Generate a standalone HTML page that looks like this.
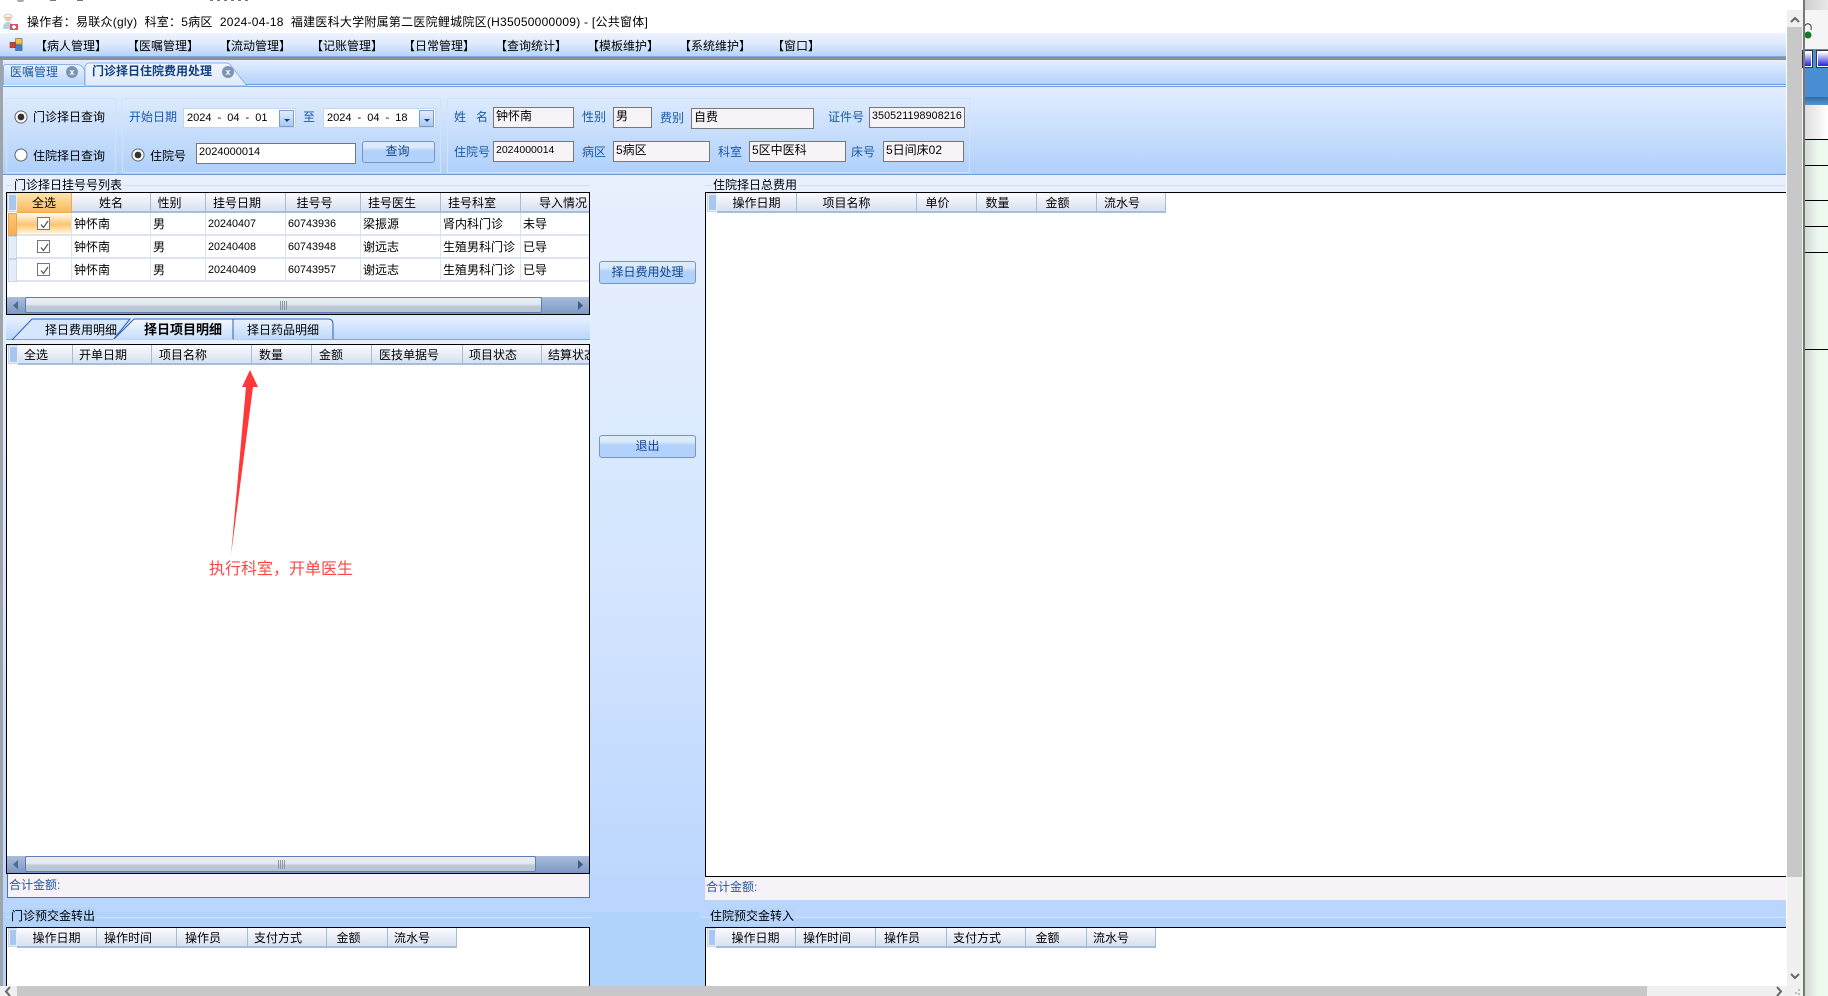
<!DOCTYPE html>
<html lang="zh"><head><meta charset="utf-8"><title>门诊择日住院费用处理</title>
<style>
html,body{margin:0;padding:0;width:1828px;height:996px;overflow:hidden;background:#fff}
body{position:relative;font-family:"Liberation Sans","WenQuanYi Zen Hei","Noto Sans CJK SC",sans-serif;font-size:12px;color:#000}
div,span{position:absolute;box-sizing:border-box;white-space:nowrap}
svg{position:absolute;overflow:visible}
.b{color:#1b5aa5}
.t{line-height:16px;height:16px}
.in{background:#f8f3f7;border:1px solid #777;line-height:17px;padding-left:2px;height:21px}
.in.w{background:#fff}
.date{background:#fff;border:1px solid #c5d5ea;height:20px;line-height:18px;padding-left:3px;font-size:11px;width:113px;word-spacing:3px}
.dd{width:15px;height:17px;top:1px;background:linear-gradient(#e0ecfc,#a9caf6);border:1px solid #7c9cc8}
.dd:after{content:"";position:absolute;left:4px;top:8px;border:3px solid transparent;border-top:3px solid #123f7f}
.gb{border:1px solid #d5e2f3}
.btn{border:1px solid #7795bd;border-radius:3px;background:linear-gradient(#dceafc 0,#dceafc 25%,#b3d2fb 45%,#b3d2fb 100%);color:#12458c;text-align:center;line-height:19px}
.grid{background:#fff;border:1px solid #000;overflow:hidden}
.h{top:0;height:20px;line-height:21px;text-align:center;background:linear-gradient(#fafbfe,#d8e0ef);border-right:1px solid #a4bdd6;border-bottom:2px solid #a4bfd9}
.ind{top:1px;height:17px;background:#a9c6f0;border:1px solid #e5eefa;outline:1px solid #c7d7ea}
.c{height:23px;line-height:22px;padding-left:3px;border-right:1px solid #dde3f0;border-bottom:2px solid #dde3f0;overflow:hidden}
.n{font-size:10.8px}
.cb{width:13px;height:13px;border:1px solid #777;background:#fff;left:30px}
.cb svg{left:1px;top:1px}
.sb{height:17px;background:linear-gradient(#a9bcdc,#7c98c2)}
.th{top:0;height:16px;background:linear-gradient(#eceef6 0,#e3e7f1 45%,#bcc8d6 60%,#bac6d4 100%);border:1px solid #5d7fb0;border-radius:2px}
.gr{top:5px;height:9px;width:8px;background:repeating-linear-gradient(90deg,#8b97a8 0,#8b97a8 1px,transparent 1px,transparent 2px)}
.m{top:38px}
</style></head><body>

<!-- top clipped title fragments -->
<div style="left:17px;top:0;width:7px;height:2px;background:#aaa;border-radius:0 0 3px 3px"></div>
<div style="left:50px;top:0;width:6px;height:1px;background:#777"></div>
<div style="left:77px;top:0;width:6px;height:1px;background:#777"></div>
<div style="left:210px;top:0;width:40px;height:1px;background:repeating-linear-gradient(90deg,#777 0,#777 3px,transparent 3px,transparent 7px)"></div>

<!-- status line -->
<svg style="left:2px;top:13px" width="16" height="18" viewBox="0 0 16 18"><circle cx="6" cy="5" r="3.5" fill="#f3c9a8"/><path d="M2 3 Q6 -1 10 3 L10 4 L2 4Z" fill="#fff" stroke="#c9a7b0" stroke-width=".6"/><path d="M1 16 Q1 9 6 9 Q11 9 11 16Z" fill="#b8cfe0"/><rect x="8" y="11" width="8" height="6" fill="#e05060"/><rect x="11" y="12" width="2" height="4" fill="#fff"/><rect x="10" y="13" width="4" height="2" fill="#fff"/></svg>
<div class="t" style="left:27px;top:14px;font-size:12px;letter-spacing:.25px">操作者：易联众(gly)&nbsp; 科室：5病区&nbsp; 2024-04-18&nbsp; 福建医科大学附属第二医院鲤城院区(H35050000009) - [公共窗体]</div>

<!-- menu bar -->
<div style="left:0;top:33px;width:1786px;height:24px;background:linear-gradient(#edf3fe,#dfeafd 45%,#b5d3fb);border-bottom:1px solid #7fa9de"></div>
<svg style="left:10px;top:38px" width="13" height="14" viewBox="0 0 14 14"><rect x="0" y="4" width="6" height="6" fill="#e03a2a" stroke="#555" stroke-width=".6"/><rect x="6" y="0" width="7" height="6" fill="#f5c63a" stroke="#555" stroke-width=".6"/><rect x="6" y="7" width="7" height="6" fill="#3c7fd0" stroke="#555" stroke-width=".6"/></svg>
<div class="t m" style="left:35px">【病人管理】</div>
<div class="t m" style="left:127px">【医嘱管理】</div>
<div class="t m" style="left:219px">【流动管理】</div>
<div class="t m" style="left:311px">【记账管理】</div>
<div class="t m" style="left:403px">【日常管理】</div>
<div class="t m" style="left:495px">【查询统计】</div>
<div class="t m" style="left:587px">【模板维护】</div>
<div class="t m" style="left:679px">【系统维护】</div>
<div class="t m" style="left:772px">【窗口】</div>

<!-- window frame and tab strip -->
<div style="left:0;top:57px;width:1786px;height:3px;background:#8d8f96"></div>
<div style="left:0;top:60px;width:3px;height:926px;background:#9fa3aa"></div>
<div style="left:3px;top:60px;width:1783px;height:25px;background:linear-gradient(#e4eefe,#b5d3fb);border-bottom:1px solid #6e9cd8"></div>
<div style="left:3px;top:85px;width:1783px;height:2px;background:#e8f1fe;border-bottom:1px solid #6e9cd8"></div>
<div style="left:3px;top:64px;width:82px;height:21px;background:linear-gradient(#e9f2ff,#b9d5fb);border:1px solid #8fb3de;border-bottom:0;border-radius:3px 8px 0 0"></div>
<div class="t b" style="left:10px;top:64px;font-size:12px">医嘱管理</div>
<div style="left:66px;top:66px;width:12px;height:12px;border-radius:50%;background:#7d93b5;color:#fff;font:bold 9px/12px 'Liberation Sans';text-align:center">x</div>
<svg style="left:84px;top:62px" width="166" height="24" viewBox="0 0 166 24"><path d="M1 24 V6 Q1 1 6 1 H142 Q146 1 148 5 L163 24Z" fill="url(#ta)" stroke="#8fb3de"/><defs><linearGradient id="ta" x1="0" y1="0" x2="0" y2="1"><stop offset="0" stop-color="#f0f6ff"/><stop offset="1" stop-color="#dfeafd"/></linearGradient></defs></svg>
<div class="t" style="left:92px;top:63px;font-weight:bold;color:#123f7f;font-size:12px">门诊择日住院费用处理</div>
<div style="left:222px;top:66px;width:12px;height:12px;border-radius:50%;background:#7d93b5;color:#fff;font:bold 9px/12px 'Liberation Sans';text-align:center">x</div>

<!-- query panel -->
<div style="left:3px;top:87px;width:1783px;height:88px;background:linear-gradient(#e3eefe,#afd0fb);border-bottom:1px solid #6e9cd8"></div>
<div class="gb" style="left:6px;top:98px;width:110px;height:75px"></div>
<div class="gb" style="left:122px;top:98px;width:319px;height:75px"></div>
<div class="gb" style="left:447px;top:98px;width:523px;height:75px"></div>

<svg style="left:14px;top:110px" width="14" height="14"><circle cx="7" cy="7" r="6" fill="#fff" stroke="#666"/><circle cx="7" cy="7" r="3.4" fill="#333"/></svg>
<div class="t" style="left:33px;top:109px">门诊择日查询</div>
<svg style="left:14px;top:148px" width="14" height="14"><circle cx="7" cy="7" r="6" fill="#fff" stroke="#666"/></svg>
<div class="t" style="left:33px;top:148px">住院择日查询</div>

<div class="t b" style="left:129px;top:109px">开始日期</div>
<div class="date" style="left:183px;top:108px">2024 - 04 - 01<div class="dd" style="left:95px"></div></div>
<div class="t b" style="left:303px;top:109px">至</div>
<div class="date" style="left:323px;top:108px">2024 - 04 - 18<div class="dd" style="left:95px"></div></div>
<svg style="left:131px;top:148px" width="14" height="14"><circle cx="7" cy="7" r="6" fill="#fff" stroke="#666"/><circle cx="7" cy="7" r="3.4" fill="#333"/></svg>
<div class="t" style="left:150px;top:148px">住院号</div>
<div class="in w" style="left:196px;top:143px;width:160px;font-size:11px">2024000014</div>
<div class="btn" style="left:362px;top:141px;width:73px;height:22px;text-indent:-2px">查询</div>

<div class="t b" style="left:454px;top:109px">姓&nbsp;&nbsp;&nbsp;名</div>
<div class="in" style="left:493px;top:107px;width:81px">钟怀南</div>
<div class="t b" style="left:582px;top:109px">性别</div>
<div class="in" style="left:613px;top:107px;width:39px">男</div>
<div class="t b" style="left:660px;top:110px">费别</div>
<div class="in" style="left:691px;top:108px;width:123px">自费</div>
<div class="t b" style="left:828px;top:109px">证件号</div>
<div class="in" style="left:869px;top:107px;width:96px;font-size:10.7px;padding-left:2px;letter-spacing:.1px">350521198908216</div>

<div class="t b" style="left:454px;top:144px">住院号</div>
<div class="in" style="left:493px;top:141px;width:81px;font-size:10.5px">2024000014</div>
<div class="t b" style="left:582px;top:144px">病区</div>
<div class="in" style="left:613px;top:141px;width:97px">5病区</div>
<div class="t b" style="left:718px;top:144px">科室</div>
<div class="in" style="left:749px;top:141px;width:97px">5区中医科</div>
<div class="t b" style="left:851px;top:144px">床号</div>
<div class="in" style="left:883px;top:141px;width:81px">5日间床02</div>

<!-- main background -->
<div style="left:3px;top:175px;width:1783px;height:811px;background:linear-gradient(#e8effd 0,#e0ecfe 25%,#d5e8fe 40%,#d5e5fe 50%,#bad6fe 90%,#bad6fe 100%)"></div>
<div style="left:3px;top:175px;width:587px;height:20px;background:#e8effd"></div>
<div style="left:700px;top:175px;width:1086px;height:20px;background:#e8effd"></div>
<div style="left:3px;top:912px;width:1783px;height:74px;background:#b0d3fb"></div>

<!-- left list group -->
<div style="left:6px;top:185px;width:584px;height:1px;background:#d8deeb"></div>
<div class="t" style="left:13px;top:177px;background:#e8effd;padding:0 1px">门诊择日挂号号列表</div>

<div class="grid" style="left:6px;top:192px;width:584px;height:123px">
  <div class="ind" style="left:1px;width:9px"></div>
  <div class="h" style="left:10px;width:55px;background:linear-gradient(#fde6ad,#f8b85f);border-right:1px solid #f0a84a;border-bottom:1px solid #f0a84a">全选</div>
  <div class="h" style="left:65px;width:79px">姓名</div>
  <div class="h" style="left:144px;width:55px;padding-right:17px">性别</div>
  <div class="h" style="left:199px;width:80px;padding-right:17px">挂号日期</div>
  <div class="h" style="left:279px;width:75px;padding-right:17px">挂号号</div>
  <div class="h" style="left:354px;width:80px;padding-right:17px">挂号医生</div>
  <div class="h" style="left:434px;width:80px;padding-right:17px">挂号科室</div>
  <div class="h" style="left:514px;width:68px;text-align:right;padding-right:2px;border-right:0">导入情况</div>

  <div style="left:1px;top:20px;width:9px;height:23px;background:linear-gradient(#fbc778,#f8ad50);border:1px solid #eda54a"></div>
  <div style="left:1px;top:43px;width:9px;height:23px;background:#e5edf8;border:1px solid #c7d7ea"></div>
  <div style="left:1px;top:66px;width:9px;height:23px;background:#e5edf8;border:1px solid #c7d7ea"></div>

  <div class="c" style="left:10px;top:20px;width:55px;background:linear-gradient(#fffdf5,#ffc56e 55%,#fff8e0)"></div>
  <div class="c" style="left:10px;top:43px;width:55px"></div>
  <div class="c" style="left:10px;top:66px;width:55px"></div>
  <div class="cb" style="top:24px"><svg width="11" height="11"><path d="M2 5.5 L4.5 8.5 L9 2" fill="none" stroke="#555" stroke-width="1.2"/></svg></div>
  <div class="cb" style="top:47px"><svg width="11" height="11"><path d="M2 5.5 L4.5 8.5 L9 2" fill="none" stroke="#555" stroke-width="1.2"/></svg></div>
  <div class="cb" style="top:70px"><svg width="11" height="11"><path d="M2 5.5 L4.5 8.5 L9 2" fill="none" stroke="#555" stroke-width="1.2"/></svg></div>

  <div class="c" style="left:65px;top:20px;width:79px;padding-left:2px">钟怀南</div>
  <div class="c" style="left:144px;top:20px;width:55px;padding-left:2px">男</div>
  <div class="c n" style="left:199px;top:20px;width:80px;padding-left:2px">20240407</div>
  <div class="c n" style="left:279px;top:20px;width:75px;padding-left:2px">60743936</div>
  <div class="c" style="left:354px;top:20px;width:80px;padding-left:2px">梁振源</div>
  <div class="c" style="left:434px;top:20px;width:80px;padding-left:2px">肾内科门诊</div>
  <div class="c" style="left:514px;top:20px;width:68px;border-right:0;padding-left:2px">未导</div>

  <div class="c" style="left:65px;top:43px;width:79px;padding-left:2px">钟怀南</div>
  <div class="c" style="left:144px;top:43px;width:55px;padding-left:2px">男</div>
  <div class="c n" style="left:199px;top:43px;width:80px;padding-left:2px">20240408</div>
  <div class="c n" style="left:279px;top:43px;width:75px;padding-left:2px">60743948</div>
  <div class="c" style="left:354px;top:43px;width:80px;padding-left:2px">谢远志</div>
  <div class="c" style="left:434px;top:43px;width:80px;padding-left:2px">生殖男科门诊</div>
  <div class="c" style="left:514px;top:43px;width:68px;border-right:0;padding-left:2px">已导</div>

  <div class="c" style="left:65px;top:66px;width:79px;padding-left:2px">钟怀南</div>
  <div class="c" style="left:144px;top:66px;width:55px;padding-left:2px">男</div>
  <div class="c n" style="left:199px;top:66px;width:80px;padding-left:2px">20240409</div>
  <div class="c n" style="left:279px;top:66px;width:75px;padding-left:2px">60743957</div>
  <div class="c" style="left:354px;top:66px;width:80px;padding-left:2px">谢远志</div>
  <div class="c" style="left:434px;top:66px;width:80px;padding-left:2px">生殖男科门诊</div>
  <div class="c" style="left:514px;top:66px;width:68px;border-right:0;padding-left:2px">已导</div>

  <div class="sb" style="left:0;top:104px;width:582px">
    <svg style="left:6px;top:4px" width="6" height="9"><path d="M5 0 V9 L0 4.5Z" fill="#4f6a90"/></svg>
    <div class="th" style="left:18px;width:517px"><div class="gr" style="left:254px;top:3px"></div></div>
    <svg style="left:571px;top:4px" width="6" height="9"><path d="M0 0 V9 L5 4.5Z" fill="#3f5a80"/></svg>
  </div>
</div>

<!-- sub tabs -->
<div style="left:6px;top:318px;width:584px;height:22px;background:linear-gradient(#e6effe,#b9d6fc)"></div>
<div style="left:6px;top:339px;width:584px;height:1px;background:#7fa8d8"></div>
<svg style="left:6px;top:317px" width="335" height="24" viewBox="0 0 335 24">
<path d="M6 23 L26 2 H124 L107 23Z" fill="#d6e6fc" stroke="#2a62b8"/>
<path d="M227 23 V2 H322 Q327 2 327 7 V22" fill="url(#tb)" stroke="#2a62b8"/>
<path d="M107 23 L128 2 H227 V23Z" fill="url(#tc)" stroke="#2a62b8"/>
<path d="M107 23 H227" stroke="#bcd8fc" stroke-width="2"/>
<defs><linearGradient id="tb" x1="0" y1="0" x2="0" y2="1"><stop offset="0" stop-color="#eaf2fe"/><stop offset="1" stop-color="#bcd8fc"/></linearGradient><linearGradient id="tc" x1="0" y1="0" x2="0" y2="1"><stop offset="0" stop-color="#f4f8ff"/><stop offset="1" stop-color="#c6ddfc"/></linearGradient></defs>
</svg>
<div class="t" style="left:45px;top:322px">择日费用明细</div>
<div class="t" style="left:144px;top:322px;font-weight:bold;font-size:13px">择日项目明细</div>
<div class="t" style="left:247px;top:322px">择日药品明细</div>

<!-- detail grid -->
<div style="left:6px;top:340px;width:584px;height:4px;background:#e8effd"></div>
<div class="grid" style="left:6px;top:344px;width:584px;height:530px">
  <div class="ind" style="left:2px;width:9px"></div>
  <div class="h" style="left:11px;width:55px;text-align:left;padding-left:6px">全选</div>
  <div class="h" style="left:66px;width:79px;text-align:left;padding-left:6px">开单日期</div>
  <div class="h" style="left:145px;width:100px;text-align:left;padding-left:7px">项目名称</div>
  <div class="h" style="left:245px;width:60px;text-align:left;padding-left:7px">数量</div>
  <div class="h" style="left:305px;width:60px;text-align:left;padding-left:7px">金额</div>
  <div class="h" style="left:365px;width:91px;text-align:left;padding-left:7px">医技单据号</div>
  <div class="h" style="left:456px;width:79px;text-align:left;padding-left:6px">项目状态</div>
  <div class="h" style="left:535px;width:47px;text-align:left;padding-left:6px;overflow:hidden;border-right:0">结算状态</div>
  <div class="sb" style="left:0;top:511px;width:582px">
    <svg style="left:6px;top:4px" width="6" height="9"><path d="M5 0 V9 L0 4.5Z" fill="#4f6a90"/></svg>
    <div class="th" style="left:18px;width:511px"><div class="gr" style="left:252px;top:3px"></div></div>
    <svg style="left:571px;top:4px" width="6" height="9"><path d="M0 0 V9 L5 4.5Z" fill="#3f5a80"/></svg>
  </div>
</div>
<div style="left:7px;top:874px;width:583px;height:24px;background:#f7f2f7;border:1px solid #4d74aa;border-top:0"></div>
<div class="t b" style="left:9px;top:877px">合计金额:</div>

<!-- annotation -->
<svg style="left:0;top:0" width="400" height="600"><path d="M250 370 L258 387 L253 387 L231 555 L246 387 L242 387Z" fill="#ff3838"/></svg>
<div style="left:209px;top:559px;font-size:16px;line-height:22px;color:#ff4646">执行科室，开单医生</div>

<!-- middle buttons -->
<div class="btn" style="left:599px;top:261px;width:97px;height:23px;line-height:20px">择日费用处理</div>
<div class="btn" style="left:599px;top:435px;width:97px;height:23px;line-height:20px">退出</div>

<!-- right top group -->
<div style="left:705px;top:185px;width:1081px;height:1px;background:#d8deeb"></div>
<div class="t" style="left:712px;top:177px;background:#e8effd;padding:0 1px">住院择日总费用</div>
<div style="left:705px;top:192px;width:1081px;height:685px;background:#fff;border-top:1px solid #000;border-left:1px solid #000;border-bottom:1px solid #000;overflow:hidden">
  <div class="ind" style="left:2px;width:9px"></div>
  <div class="h" style="left:11px;width:80px">操作日期</div>
  <div class="h" style="left:91px;width:120px;padding-right:20px">项目名称</div>
  <div class="h" style="left:211px;width:60px;padding-right:18px">单价</div>
  <div class="h" style="left:271px;width:60px;padding-right:18px">数量</div>
  <div class="h" style="left:331px;width:60px;padding-right:18px">金额</div>
  <div class="h" style="left:391px;width:69px;text-align:left;padding-left:7px">流水号</div>
</div>
<div style="left:705px;top:877px;width:1081px;height:23px;background:#f7f2f7"></div>
<div class="t b" style="left:706px;top:879px">合计金额:</div>
<div style="left:700px;top:900px;width:1086px;height:17px;background:#bbd6fe"></div>

<!-- bottom left -->
<div style="left:590px;top:897px;width:110px;height:15px;background:#bad6fe"></div>
<div style="left:3px;top:898px;width:587px;height:14px;background:#bad6fe"></div>
<div style="left:5px;top:917px;width:587px;height:1px;background:#cfe2f8"></div>
<div class="t" style="left:10px;top:908px;background:#b0d3fb;padding:0 1px">门诊预交金转出</div>
<div class="grid" style="left:6px;top:927px;width:584px;height:70px;border-bottom:0">
  <div class="ind" style="left:2px;width:8px"></div>
  <div class="h" style="left:10px;width:80px">操作日期</div>
  <div class="h" style="left:90px;width:80px;padding-right:17px">操作时间</div>
  <div class="h" style="left:170px;width:71px;padding-right:18px">操作员</div>
  <div class="h" style="left:241px;width:79px;padding-right:18px">支付方式</div>
  <div class="h" style="left:320px;width:61px;padding-right:17px">金额</div>
  <div class="h" style="left:381px;width:69px;text-align:left;padding-left:6px">流水号</div>
</div>

<!-- bottom right -->
<div style="left:702px;top:917px;width:1084px;height:1px;background:#cfe2f8"></div>
<div class="t" style="left:709px;top:908px;background:#b6d5fc;padding:0 1px">住院预交金转入</div>
<div style="left:705px;top:927px;width:1081px;height:70px;background:#fff;border-top:1px solid #000;border-left:1px solid #000;overflow:hidden">
  <div class="ind" style="left:2px;width:8px"></div>
  <div class="h" style="left:10px;width:80px">操作日期</div>
  <div class="h" style="left:90px;width:80px;padding-right:17px">操作时间</div>
  <div class="h" style="left:170px;width:71px;padding-right:18px">操作员</div>
  <div class="h" style="left:241px;width:79px;padding-right:18px">支付方式</div>
  <div class="h" style="left:320px;width:61px;padding-right:17px">金额</div>
  <div class="h" style="left:381px;width:69px;text-align:left;padding-left:6px">流水号</div>
</div>

<!-- browser scrollbars -->
<div style="left:1787px;top:10px;width:16px;height:976px;background:#f0f0f0"></div>
<div style="left:1787px;top:27px;width:15px;height:850px;background:#c8c8c8"></div>
<svg style="left:1790px;top:16px" width="10" height="8"><path d="M1 6 L5 2 L9 6" fill="none" stroke="#666" stroke-width="2"/></svg>
<svg style="left:1790px;top:972px" width="10" height="8"><path d="M1 2 L5 6 L9 2" fill="none" stroke="#666" stroke-width="2"/></svg>
<div style="left:0;top:986px;width:1803px;height:10px;background:#f0f0f0"></div>
<div style="left:17px;top:986px;width:1630px;height:10px;background:#c8c8c8"></div>
<svg style="left:4px;top:987px" width="8" height="9"><path d="M6 0 L2 4.5 L6 9" fill="none" stroke="#666" stroke-width="2"/></svg>
<svg style="left:1775px;top:987px" width="8" height="9"><path d="M2 0 L6 4.5 L2 9" fill="none" stroke="#666" stroke-width="2"/></svg>
<div style="left:1795px;top:992px;width:2px;height:2px;background:#bbb"></div>
<div style="left:1798px;top:989px;width:2px;height:2px;background:#bbb"></div>
<div style="left:1798px;top:993px;width:2px;height:2px;background:#bbb"></div>

<!-- right window sliver -->
<div style="left:1803px;top:0;width:25px;height:996px;background:#fff"></div>
<div style="left:1803px;top:0;width:25px;height:10px;background:linear-gradient(90deg,#ccc,#e8e8e8)"></div>
<div style="left:1803px;top:10px;width:25px;height:39px;background:#f5f5f5"></div>
<svg style="left:1803px;top:22px" width="10" height="18"><path d="M1 5 Q3 1 6 2 Q9 3 8 8" fill="none" stroke="#333"/><circle cx="5" cy="13" r="3.5" fill="#127a2a"/></svg>
<div style="left:1803px;top:49px;width:25px;height:48px;background:#4a8fd4"></div>
<div style="left:1803px;top:97px;width:25px;height:8px;background:linear-gradient(#2e6ca8,#5a94cc)"></div>
<div style="left:1803px;top:51px;width:9px;height:16px;background:linear-gradient(#fff,#2222dd);border:1px solid #fff;border-left:0;outline:1px solid #334"></div>
<div style="left:1817px;top:51px;width:11px;height:16px;background:linear-gradient(#fff,#2222dd);border:1px solid #fff;border-right:0;outline:1px solid #334"></div>
<div style="left:1804px;top:139px;width:24px;height:857px;background:linear-gradient(90deg,#cfd8d2,#eef9f0 60%,#eefaf0)"></div>
<div style="left:1804px;top:105px;width:24px;height:34px;background:linear-gradient(90deg,#ddd,#fff)"></div>
<div style="left:1804px;top:139px;width:24px;height:1px;background:#000"></div>
<div style="left:1804px;top:165px;width:24px;height:1px;background:#000"></div>
<div style="left:1804px;top:200px;width:24px;height:1px;background:#000"></div>
<div style="left:1804px;top:226px;width:24px;height:1px;background:#000"></div>
<div style="left:1804px;top:252px;width:24px;height:1px;background:#000"></div>
<div style="left:1804px;top:349px;width:24px;height:1px;background:#000"></div>
<div style="left:1803px;top:0;width:2px;height:996px;background:#777"></div>
</body></html>
